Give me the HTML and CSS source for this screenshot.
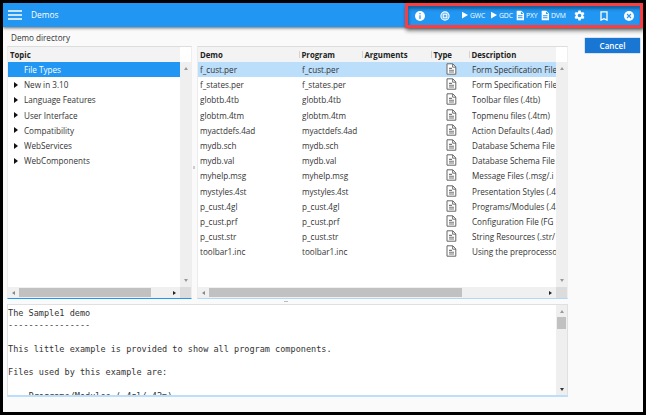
FILE: index.html
```
<!DOCTYPE html>
<html lang="en">
<head>
<meta charset="utf-8">
<title>Demos</title>
<link rel="stylesheet" href="styles.css">
</head>
<body>
<svg class="defs" aria-hidden="true">
  <symbol id="doc" viewBox="0 0 11 12"><path d="M1 .8h5.8L9.800 4v7.2H1z" fill="#fff" stroke="#666" stroke-width="1"/><path d="M6.600 1v3.200H9.800" fill="none" stroke="#666" stroke-width=".9"/><path d="M3 5.400h3M3 7.200h5M3 9h5" stroke="#777" stroke-width="1.100"/></symbol>
  <symbol id="docw" viewBox="0 0 10 12"><path fill="#fff" fill-rule="evenodd" d="M.8.5h5.4L9.5 3.7v8H.8zM5.8 1.4v2.8h2.8zM2.3 5.8v1h5.4v-1zM2.3 8.2v1h5.4v-1z"/></symbol>
  <symbol id="play" viewBox="0 0 6 8"><path fill="#fff" d="M0 .8l6 3.3-6 3.3z"/></symbol>
</svg>
<div class="window">
  <header class="bar">
    <svg class="menu" viewBox="0 0 14 10"><path d="M0 1h14M0 5h14M0 9h14" stroke="#fff" stroke-width="1.7"/></svg>
    <h1>Demos</h1>
    <nav class="tools">
      <svg class="t-info" viewBox="0 0 10 10"><circle cx="5" cy="5" r="5" fill="#fff"/><path d="M5 2.1v1.2M5 4.3v3.6" stroke="#2196f3" stroke-width="1.2"/></svg>
      <svg class="t-chip" viewBox="0 0 10 10"><circle cx="5" cy="5" r="4.1" fill="#58aef5" stroke="#fff" stroke-width="1.1"/><rect x="3.2" y="3.2" width="3.6" height="3.6" fill="#58aef5" stroke="#fff"/></svg>
      <span class="tool t-gwc"><svg class="play"><use href="#play"/></svg>GWC</span>
      <span class="tool t-gdc"><svg class="play"><use href="#play"/></svg>GDC</span>
      <span class="tool t-pxy"><svg class="docw"><use href="#docw"/></svg>PXY</span>
      <span class="tool t-dvm"><svg class="docw"><use href="#docw"/></svg>DVM</span>
      <svg class="t-gear" viewBox="0 0 24 24"><path fill="#fff" fill-rule="evenodd" d="M9.5 1h5l.6 3.3 2 1.2 3.200-1.200 2.500 4.300-2.600 2.200v2.400l2.600 2.200-2.500 4.300-3.200-1.200-2 1.200-.6 3.300h-5l-.6-3.300-2-1.200-3.200 1.200-2.500-4.300 2.600-2.200v-2.400L1.200 8.600l2.500-4.300 3.200 1.200 2-1.200zM12 8a4 4 0 100 8 4 4 0 000-8z"/></svg>
      <svg class="t-mark" viewBox="0 0 8 10"><path d="M1 .9h6v8.200L4 7.700 1 9.100z" fill="none" stroke="#fff" stroke-width="1.300"/></svg>
      <svg class="t-close" viewBox="0 0 10 10"><circle cx="5" cy="5" r="5" fill="#fff"/><path d="M3 3l4 4M7 3L3 7" stroke="#2196f3" stroke-width="1.100"/></svg>
    </nav>
  </header>
  <div class="body">
    <main class="main">
      <p class="label"><span>Demo directory</span></p>
      <div class="panes">
        <section class="panel tree">
          <div class="head"><b>Topic</b></div>
          <div class="content">
            <ul class="rows">
              <li class="sel"><span>File Types</span></li>
              <li class="node"><span>New in 3.10</span></li>
              <li class="node"><span>Language Features</span></li>
              <li class="node"><span>User Interface</span></li>
              <li class="node"><span>Compatibility</span></li>
              <li class="node"><span>WebServices</span></li>
              <li class="node"><span>WebComponents</span></li>
            </ul>
            <div class="vbar"><i class="up"></i><i class="down"></i></div>
          </div>
          <div class="hbar"><i class="left"></i><span class="thumb"></span><i class="right"></i><span class="corner"></span></div>
        </section>
        <div class="split"></div>
        <section class="panel table">
          <div class="head cols"><b>Demo</b><b>Program</b><b>Arguments</b><b>Type</b><b>Description</b></div>
          <div class="content">
            <div class="rows">
              <div class="cols row sel"><span>f_cust.per</span><span>f_cust.per</span><span></span><svg><use href="#doc"/></svg><span>Form Specification File</span></div>
              <div class="cols row"><span>f_states.per</span><span>f_states.per</span><span></span><svg><use href="#doc"/></svg><span>Form Specification File</span></div>
              <div class="cols row"><span>globtb.4tb</span><span>globtb.4tb</span><span></span><svg><use href="#doc"/></svg><span>Toolbar files (.4tb)</span></div>
              <div class="cols row"><span>globtm.4tm</span><span>globtm.4tm</span><span></span><svg><use href="#doc"/></svg><span>Topmenu files (.4tm)</span></div>
              <div class="cols row"><span>myactdefs.4ad</span><span>myactdefs.4ad</span><span></span><svg><use href="#doc"/></svg><span>Action Defaults (.4ad)</span></div>
              <div class="cols row"><span>mydb.sch</span><span>mydb.sch</span><span></span><svg><use href="#doc"/></svg><span>Database Schema File</span></div>
              <div class="cols row"><span>mydb.val</span><span>mydb.val</span><span></span><svg><use href="#doc"/></svg><span>Database Schema File</span></div>
              <div class="cols row"><span>myhelp.msg</span><span>myhelp.msg</span><span></span><svg><use href="#doc"/></svg><span>Message Files (.msg/.i</span></div>
              <div class="cols row"><span>mystyles.4st</span><span>mystyles.4st</span><span></span><svg><use href="#doc"/></svg><span>Presentation Styles (.4</span></div>
              <div class="cols row"><span>p_cust.4gl</span><span>p_cust.4gl</span><span></span><svg><use href="#doc"/></svg><span>Programs/Modules (.4</span></div>
              <div class="cols row"><span>p_cust.prf</span><span>p_cust.prf</span><span></span><svg><use href="#doc"/></svg><span>Configuration File (FG</span></div>
              <div class="cols row"><span>p_cust.str</span><span>p_cust.str</span><span></span><svg><use href="#doc"/></svg><span>String Resources (.str/</span></div>
              <div class="cols row"><span>toolbar1.inc</span><span>toolbar1.inc</span><span></span><svg><use href="#doc"/></svg><span>Using the preprocesso</span></div>
            </div>
            <div class="vbar"><i class="up"></i><i class="down"></i></div>
          </div>
          <div class="hbar"><i class="left"></i><span class="thumb"></span><i class="right"></i><span class="corner"></span></div>
        </section>
      </div>
      <div class="hsplit"></div>
      <section class="text">
<pre>The Sample1 demo
----------------

This little example is provided to show all program components.

Files used by this example are:

    Programs/Modules (.4gl/.42m)</pre>
        <div class="vbar"><i class="up"></i><span class="vthumb"></span><i class="down dark"></i></div>
      </section>
    </main>
    <aside><button><span>Cancel</span></button></aside>
  </div>
</div>
</body>
</html>
```
FILE: styles.css
```
* { box-sizing: border-box; }
body { margin: 0; font: 9.800px/15.200px "Open Sans", "Noto Sans", sans-serif; color: #333; }
ul, p, h1, pre { margin: 0; padding: 0; list-style: none; }
svg { display: block; flex: none; }
.defs { position: absolute; width: 0; height: 0; }
.window { width: 646px; height: 415px; border: 3px solid #000; background: #fafafa; overflow: hidden; }
.bar { height: 24px; background: #2196f3; box-shadow: 0 1px 3px rgba(0,0,0,.6); display: flex; align-items: center; padding-left: 5px; position: relative; }
.menu { width: 14px; height: 10px; }
h1 { font-size: 9.500px; font-weight: 400; transform: scaleX(.88); transform-origin: left; color: #fff; margin-left: 9px; }
.label span, li span, .row span { display: block; transform: scaleX(.83); transform-origin: left; }
.tools { position: absolute; left: 402px; top: 0; width: 238px; height: 25px; border: 3px solid #f93e41; box-shadow: 1px 3px 4px rgba(0,0,0,.45), inset 1px 3px 3px rgba(0,0,0,.35); display: flex; align-items: center; padding-left: 7px; color: #fff; font-size: 6.800px; letter-spacing: -.1px; }
.tools > svg { width: 10px; height: 10px; }
.t-chip { margin-left: 15px; }
.tool { display: flex; align-items: center; }
.play { width: 6px; height: 8px; margin-right: 2px; }
.docw { width: 8.500px; height: 11px; margin-right: 1.500px; }
.t-gwc { width: 29px; margin-left: 12px; }
.t-gdc { width: 25px; }
.t-pxy { width: 25px; }
.t-dvm { width: 33px; }
.tools .t-gear { width: 11px; height: 11px; }
.tools .t-mark { width: 8px; margin-left: 15px; }
.t-close { margin-left: 16px; }
.body { display: flex; height: 385px; }
.main { width: 565px; padding-left: 4px; flex: none; }
.label { height: 19px; padding: 3px 0 0 4px; }
.panes { display: flex; height: 253px; }
.panel { display: flex; flex-direction: column; background: #fff; border-top: 1px solid #ddd; border-left: 1px solid #ececec; border-right: 1px solid #eee; border-bottom: 1px solid #abd8fb; overflow: hidden; }
.tree { width: 185px; border-bottom-color: #2196f3; }
.table { width: 371px; }
.split { width: 5px; position: relative; }
.split::after { content: ""; position: absolute; left: 1px; top: 120px; width: 2px; height: 3px; background: #ccc; }
.head { height: 15px; line-height: 15px; background: #f3f3f3; color: #222; border-right: 11px solid #fff; padding-left: 2px; flex: none; }
b { display: block; font-weight: 700; font-size: 9.500px; transform: scaleX(.82); transform-origin: left; }
.content { display: flex; flex: 1; min-height: 0; }
.rows { flex: 1; min-width: 0; overflow: hidden; }
.tree li { height: 15.200px; padding-left: 16px; display: flex; align-items: center; }
.tree .sel { background: #2196f3; color: #fff; }
.node::before { content: ""; border: 3px solid transparent; border-left: 4px solid #111; border-right: 0; margin: 0 6px 0 -10px; }
.vbar { width: 11px; background: #efefef; display: flex; flex-direction: column; justify-content: space-between; align-items: center; padding: 5px 0 5px; flex: none; }
i { border: 2.500px solid transparent; width: 0; height: 0; }
.up { border-top: 0; border-bottom: 3px solid #999; }
.down { border-bottom: 0; border-top: 3px solid #999; }
.dark { border-top-color: #333; }
.hbar { height: 11px; background: #f0f0f0; display: flex; align-items: center; padding-left: 4px; flex: none; }
.left { border-left: 0; border-right: 3px solid #888; margin-right: 4px; }
.right { border-right: 0; border-left: 3px solid #222; margin-left: auto; margin-right: 4px; }
.thumb { height: 9px; background: #c1c1c1; width: 132px; }
.table .thumb { width: 253px; }
.corner { width: 11px; height: 11px; background: #dcdcdc; }
.cols { display: grid; grid-template-columns: 102px 63px 69px 38px 1fr; padding-left: 2px; white-space: nowrap; }
.cols b + b { border-left: 1px solid #ccc; padding-left: 2px; height: 7px; line-height: 7px; align-self: center; margin-left: -3px; }
.cols > * { min-width: 0; }
.row { height: 15.200px; }
.row.sel { background: #bbdefb; }
.row svg { width: 11px; height: 12px; margin: 1px 0 0 12px; }
.hsplit { height: 5px; position: relative; }
.hsplit::after { content: ""; position: absolute; left: 277px; top: 2px; width: 4px; height: 1px; background: #bbb; }
.text { height: 93px; width: 561px; background: #fff; border: 1px solid #e0e0e0; border-bottom: 2px solid #bbdefb; display: flex; justify-content: space-between; overflow: hidden; }
pre { font: 8.540px/11.800px "DejaVu Sans Mono", monospace; padding: 3.300px 0 0; height: 90px; overflow: hidden; }
.text .vbar { padding-bottom: 4px; }
.vthumb { width: 9px; height: 12px; background: #c1c1c1; margin: 4px 0 auto; }
aside { padding: 11px 0 0 17px; }
button { display: block; width: 55px; height: 15px; border: 0; padding: 0; background: #1976d2; color: #fff; font: 600 9.500px/15px "Open Sans", sans-serif; box-shadow: 0 0 1px #1976d2; }
button span { display: block; transform: scaleX(.85); }
```
